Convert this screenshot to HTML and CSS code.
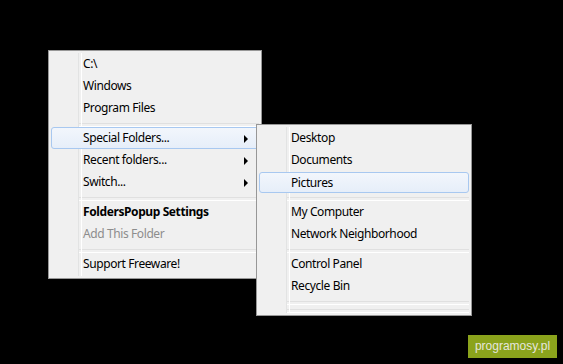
FILE: index.html
```html
<!DOCTYPE html>
<html lang="en">
<head>
    <meta charset="UTF-8">
    <title>FoldersPopup</title>
    <link rel="stylesheet" href="styles.css">
</head>
<body>
    <div class="menu main-menu">
        <div class="item">C:\</div>
        <div class="item">Windows</div>
        <div class="item">Program Files</div>
        <div class="sep"></div>
        <div class="item hover sub">Special Folders...</div>
        <div class="item sub">Recent folders...</div>
        <div class="item sub">Switch...</div>
        <div class="sep"></div>
        <div class="item bold">FoldersPopup Settings</div>
        <div class="item off">Add This Folder</div>
        <div class="sep"></div>
        <div class="item">Support Freeware!</div>
    </div>

    <div class="menu sub-menu">
        <div class="item">Desktop</div>
        <div class="item">Documents</div>
        <div class="item hover">Pictures</div>
        <div class="sep"></div>
        <div class="item">My Computer</div>
        <div class="item">Network Neighborhood</div>
        <div class="sep"></div>
        <div class="item">Control Panel</div>
        <div class="item">Recycle Bin</div>
        <div class="sep"></div>
        <div class="sep"></div>
    </div>

    <div class="mark">programosy.pl</div>
</body>
</html>
```

FILE: styles.css
```css
*{
    margin: 0;
    padding: 0;
    box-sizing: border-box;
}

body{
    width: 563px;
    height: 364px;
    background: #000;
    overflow: hidden;
    font-family: 'Noto Sans', 'Open Sans', sans-serif;
    font-size: 12px;
    letter-spacing: -0.4px;
    color: #000;
}

.menu{
    position: absolute;
    background: #f0f0f0;
    border: 1px solid #979797;
    padding: 2px 2px 3px 2px;
}

.menu::before{
    content: '';
    position: absolute;
    left: 29px;
    top: 2px;
    bottom: 2px;
    width: 2px;
    border-left: 1px solid #e2e3e3;
    border-right: 1px solid #fff;
}

.main-menu{
    left: 48px;
    top: 50px;
    width: 214px;
}

.sub-menu{
    left: 256px;
    top: 124px;
    width: 216px;
    height: 192px;
}

.item{
    position: relative;
    height: 22px;
    line-height: 20px;
    padding-left: 31px;
    border: 1px solid transparent;
    border-radius: 3px;
    white-space: nowrap;
}

.item.hover{
    background: linear-gradient(#f2f6fc, #e6eef9);
    border-color: #a8c8f0;
}

.sub-menu .item.hover{
    margin-top: 1px;
    height: 21px;
    line-height: 19px;
}

.item.sub::after{
    content: '';
    position: absolute;
    right: 10px;
    top: 7px;
    border-left: 4px solid #000;
    border-top: 4px solid transparent;
    border-bottom: 4px solid transparent;
}

.item.bold{
    font-weight: bold;
}

.item.off{
    color: #8d8d8d;
}

.sep{
    height: 8px;
    margin-left: 28px;
    padding-top: 4px;
}

.sep::before{
    content: '';
    display: block;
    height: 2px;
    border-top: 1px solid #e0e0e0;
    border-bottom: 1px solid #fff;
}

.mark{
    position: absolute;
    left: 468px;
    top: 335px;
    width: 89px;
    height: 23px;
    background: #8ba31c;
    color: #e6e6de;
    font-family: 'Liberation Sans', sans-serif;
    font-size: 12px;
    letter-spacing: 0;
    line-height: 22px;
    text-align: center;
}
```
